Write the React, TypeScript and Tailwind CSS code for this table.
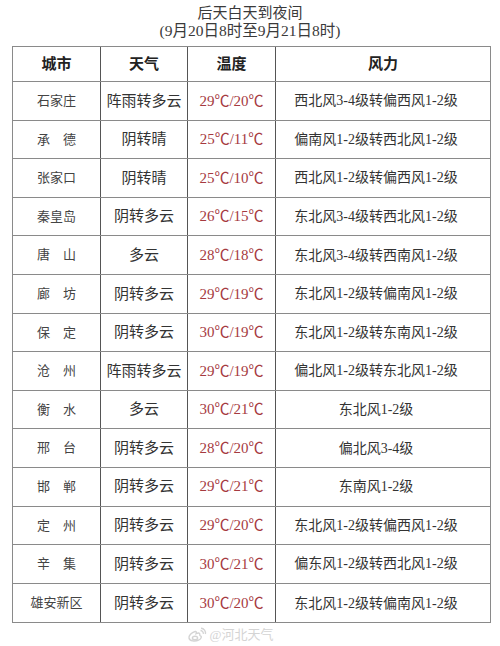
const rows = [
  { city: '石家庄', weather: '阵雨转多云', temp: '29℃/20℃', wind: '西北风3-4级转偏西风1-2级' },
  { city: '承　德', weather: '阴转晴', temp: '25℃/11℃', wind: '偏南风1-2级转西北风1-2级' },
  { city: '张家口', weather: '阴转晴', temp: '25℃/10℃', wind: '西北风1-2级转偏西风1-2级' },
  { city: '秦皇岛', weather: '阴转多云', temp: '26℃/15℃', wind: '东北风3-4级转西北风1-2级' },
  { city: '唐　山', weather: '多云', temp: '28℃/18℃', wind: '东北风3-4级转西南风1-2级' },
  { city: '廊　坊', weather: '阴转多云', temp: '29℃/19℃', wind: '东北风1-2级转偏南风1-2级' },
  { city: '保　定', weather: '阴转多云', temp: '30℃/19℃', wind: '东北风1-2级转东南风1-2级' },
  { city: '沧　州', weather: '阵雨转多云', temp: '29℃/19℃', wind: '偏北风1-2级转东北风1-2级' },
  { city: '衡　水', weather: '多云', temp: '30℃/21℃', wind: '东北风1-2级' },
  { city: '邢　台', weather: '阴转多云', temp: '28℃/20℃', wind: '偏北风3-4级' },
  { city: '邯　郸', weather: '阴转多云', temp: '29℃/21℃', wind: '东南风1-2级' },
  { city: '定　州', weather: '阴转多云', temp: '29℃/20℃', wind: '东北风1-2级转偏西风1-2级' },
  { city: '辛　集', weather: '阴转多云', temp: '30℃/21℃', wind: '偏东风1-2级转西北风1-2级' },
  { city: '雄安新区', weather: '阴转多云', temp: '30℃/20℃', wind: '东北风1-2级转偏南风1-2级' },
];

const font = { fontFamily: '"Liberation Serif", "Noto Sans CJK SC", serif' };

export default function App() {
  return (
    <div className="w-[500px] h-[646px] bg-white overflow-hidden text-[#333]" style={font}>
      {/* Title */}
      <div className="pt-[4px] flex flex-col items-center leading-[18px] text-[15px] text-[#3a3a3a]">
        <div>后天白天到夜间</div>
        <div className="text-[15.5px]">(9月20日8时至9月21日8时)</div>
      </div>

      {/* Table */}
      <div className="ml-[12px] mt-[6px] w-[479px] border border-[#8a8a8a]">
        <div className="grid grid-cols-[88px_87px_88px_1fr] h-[35px] border-b border-[#8a8a8a] text-[15px] font-bold text-[#222]">
          <div className="flex items-center justify-center border-r border-[#555]">城市</div>
          <div className="flex items-center justify-center border-r border-[#555]">天气</div>
          <div className="flex items-center justify-center border-r border-[#555]">温度</div>
          <div className="flex items-center justify-center">风力</div>
        </div>
        {rows.map((r, i) => (
          <div
            key={r.city}
            className={`grid grid-cols-[88px_87px_88px_1fr] h-[38.6px] ${i < rows.length - 1 ? 'border-b border-[#8a8a8a]' : ''}`}
          >
            <div className="flex items-center justify-center border-r border-[#555] text-[13px] text-[#444]">{r.city}</div>
            <div className="flex items-center justify-center border-r border-[#555] text-[15px] text-[#333]">{r.weather}</div>
            <div className="flex items-center justify-center border-r border-[#555] text-[15px] text-[#a63a3f]">{r.temp}</div>
            <div className="flex items-center justify-center pr-[14px] text-[14px] text-[#333]">{r.wind}</div>
          </div>
        ))}
      </div>

      {/* Watermark */}
      <div className="mt-[2px] pr-[40px] flex items-center justify-center gap-[3px] text-[13px] text-[#d4d4d4]">
        <svg width="20" height="16" viewBox="0 0 20 16" fill="none" stroke="#d4d4d4" strokeWidth="1.4">
          <path d="M8 4.5C4.5 5.5 1.5 8.5 2 11c.6 3 6 3.8 9.5 2.2 3-1.4 3.6-4 1.6-4.6-.6-.2-.2-1.2-.4-1.8-.6-1.2-2.4-.8-3.6-.2.4-1.4.2-2.6-1.1-2.1z" />
          <ellipse cx="8" cy="11" rx="2.6" ry="1.8" />
          <path d="M13.5 3.5c1.8.2 3 1.6 2.8 3.4M14 1.2c3 .2 5 2.8 4.4 5.8" />
        </svg>
        <span>@河北天气</span>
      </div>
    </div>
  );
}
